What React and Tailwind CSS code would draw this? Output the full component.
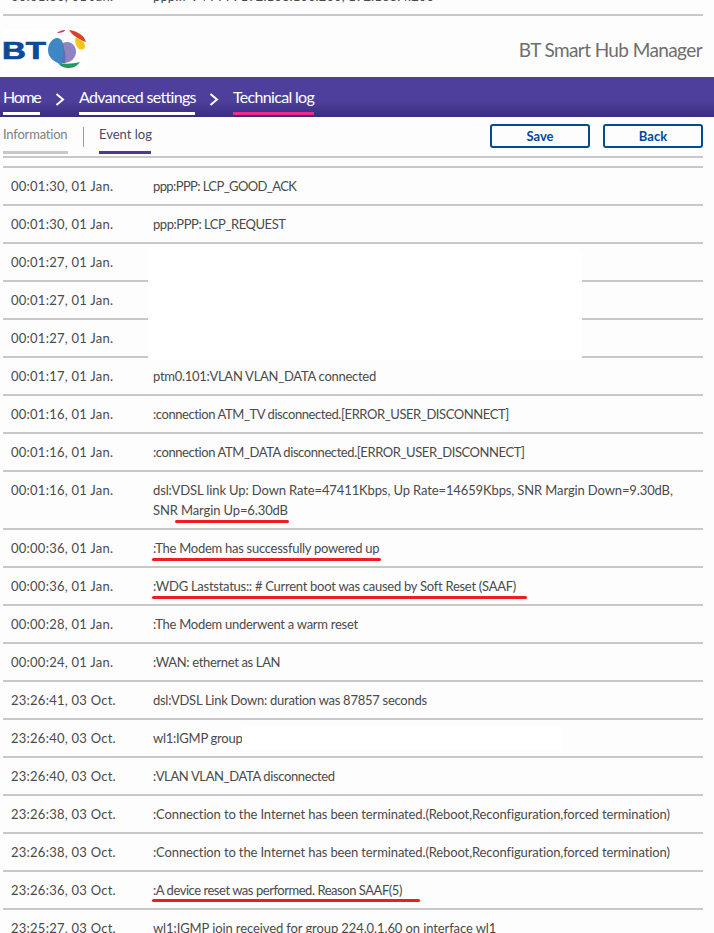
const F = "font-['Lato','Noto_Sans',sans-serif]";

const rows = [
  ["00:01:30, 01 Jan.", "ppp:PPP: LCP_GOOD_ACK", "", "", "tracking-[-0.6px]"],
  ["00:01:30, 01 Jan.", "ppp:PPP: LCP_REQUEST", "", "", "tracking-[-0.45px]"],
  ["00:01:27, 01 Jan.", ""],
  ["00:01:27, 01 Jan.", ""],
  ["00:01:27, 01 Jan.", ""],
  ["00:01:17, 01 Jan.", "ptm0.101:VLAN VLAN_DATA connected"],
  ["00:01:16, 01 Jan.", ":connection ATM_TV disconnected.[ERROR_USER_DISCONNECT]", "", "", "tracking-[-0.42px]"],
  ["00:01:16, 01 Jan.", ":connection ATM_DATA disconnected.[ERROR_USER_DISCONNECT]", "", "", "tracking-[-0.42px]"],
  ["00:01:16, 01 Jan.", "dsl:VDSL link Up: Down Rate=47411Kbps, Up Rate=14659Kbps, SNR Margin Down=9.30dB, SNR Margin Up=6.30dB", "tall", "left-[175px] w-[114px] top-[48px]", "tracking-[-0.12px]"],
  ["00:00:36, 01 Jan.", ":The Modem has successfully powered up", "", "left-[152px] w-[229px] top-[28px]"],
  ["00:00:36, 01 Jan.", ":WDG Laststatus:: # Current boot was caused by Soft Reset (SAAF)", "", "left-[152px] w-[375px] top-[28px]"],
  ["00:00:28, 01 Jan.", ":The Modem underwent a warm reset"],
  ["00:00:24, 01 Jan.", ":WAN: ethernet as LAN", "", "", "tracking-[-0.35px]"],
  ["23:26:41, 03 Oct.", "dsl:VDSL Link Down: duration was 87857 seconds"],
  ["23:26:40, 03 Oct.", "wl1:IGMP group"],
  ["23:26:40, 03 Oct.", ":VLAN VLAN_DATA disconnected", "", "", "tracking-[-0.37px]"],
  ["23:26:38, 03 Oct.", ":Connection to the Internet has been terminated.(Reboot,Reconfiguration,forced termination)", "", "", "tracking-[-0.13px]"],
  ["23:26:38, 03 Oct.", ":Connection to the Internet has been terminated.(Reboot,Reconfiguration,forced termination)", "", "", "tracking-[-0.13px]"],
  ["23:26:36, 03 Oct.", ":A device reset was performed. Reason SAAF(5)", "", "left-[152px] w-[268px] top-[27px]", "tracking-[-0.46px]"],
];

function Row({ time, msg, tall, line, track }) {
  return (
    <div className={`relative flex border-b-2 border-[#c8c8c8] ml-[3px] mr-[11px] ${tall ? "h-[58px]" : "h-[38px]"}`}>
      <div className="w-[145px] pl-[8px] pt-[8px] shrink-0 leading-[20px] tracking-[0.25px]">{time}</div>
      <div className={`w-[535px] pl-[5px] pt-[8px] leading-[20px] ${track || "tracking-[-0.27px]"}`}>{msg}</div>
      {line && <div className={`absolute h-[3px] -ml-[3px] rounded-full bg-[#ee1c25] ${line}`} />}
    </div>
  );
}

function Logo() {
  return (
    <svg width="84" height="40" viewBox="0 0 84 40" className="bg-white">
      <text x="-1" y="29" fontFamily="Liberation Sans" fontWeight="700" fontSize="23" textLength="44" lengthAdjust="spacingAndGlyphs" fill="#0b4a97" stroke="#0b4a97" strokeWidth="0.7">BT</text>
      <path d="M60 13c7-3 13 2 13 9 0 6-5 10-11 11-2 0-3 0-3-1z" fill="#8f84c0" />
      <path d="M45 20c0-7 5-12 9-12 5 0 7 6 7 12 0 5-1 10-2 14-6-1-14-5-14-14z" fill="#3f87c4" />
      <path d="M56 11c3 3 5 9 4 15-1 3-1 5-1 7 1 0 2 0 3 0 1-6 1-16-6-22z" fill="#5c6fb0" />
      <path d="M55 33c6 1 15 1 22-1-2 3-6 6-11 6-5 0-9-2-11-5z" fill="#1f9a5a" />
      <path d="M66 0c8 1 15 5 17 12-6-2-13-6-17-12z" fill="#d9412b" />
      <path d="M73 8c4 0 9 4 9 8 0 4-3 4-6 3-3-2-5-9-3-11z" fill="#f6c51e" />
      <path d="M54 3c2-2 5-3 8-3 0 2-4 3-8 3z" fill="#e8257f" />
    </svg>
  );
}

function Chevron() {
  return (
    <svg width="10" height="13" viewBox="0 0 10 13" fill="none" stroke="#fff" strokeWidth="2">
      <path d="M1.5 1 8 6.5 1.5 12" />
    </svg>
  );
}

export default function App() {
  return (
    <div className={`relative w-[714px] h-[933px] overflow-hidden bg-[#fdfdfd] text-[13px] text-[#4a4a4a] ${F}`}>
      <div className="h-[16px] overflow-hidden ml-[3px] mr-[11px] border-b-2 border-[#c8c8c8]">
        <div className="flex -mt-[14px] leading-[20px] h-[20px]">
          <div className="w-[145px] pl-[8px] tracking-[0.25px]">00:01:30, 01 Jan.</div>
          <div className="pl-[5px] tracking-[0.1px]">ppp:IPV4 PPP: 192.168.100.200, 192.168.4.200</div>
        </div>
      </div>

      <div className="h-[61px] flex items-start justify-between pl-[3px] pr-[12px] pt-[14px]">
        <Logo />
        <div className="text-[19px] tracking-[-0.6px] text-[#6e6e6e] leading-[26px] pt-[7px]">BT Smart Hub Manager</div>
      </div>

      <div className="h-[40px] flex items-start pl-[3px] text-white text-[16px] tracking-[-0.68px] bg-gradient-to-b from-[#4e3f9c] from-60% to-[#3a2c80]">
        <div className="w-[37px] h-[38px] pt-[8px] leading-[24px] tracking-[-1.3px] border-b-[3px] border-white whitespace-nowrap">Home</div>
        <div className="w-[39px] flex justify-center pt-[16px]"><Chevron /></div>
        <div className="w-[116px] h-[38px] pt-[8px] leading-[24px] border-b-[3px] border-white whitespace-nowrap">Advanced settings</div>
        <div className="w-[38px] flex justify-center pt-[16px]"><Chevron /></div>
        <div className="w-[81px] h-[38px] pt-[8px] leading-[24px] border-b-[3px] border-[#f0288c] whitespace-nowrap">Technical log</div>
      </div>

      <div className="h-[41px] flex items-start justify-between ml-[3px] mr-[11px] border-b-2 border-[#c8c8c8]">
        <div className="flex items-start h-[37px]">
          <div className="h-[37px] pt-[7px] leading-[20px] tracking-[-0.2px] text-[#808080] border-b-[3px] border-[#c8c8c8] w-[65px] whitespace-nowrap">Information</div>
          <div className="w-px h-[20px] bg-[#9a9a9a] mt-[10px] ml-[15px] mr-[15px]" />
          <div className="h-[37px] pt-[7px] leading-[20px] text-[#4a4a6a] border-b-[3px] border-[#4e3a96] w-[52px] whitespace-nowrap">Event log</div>
        </div>
        <div className="flex gap-[13px] mt-[7px]">
          <button className="w-[100px] h-[24px] rounded-[3px] border-2 border-[#004a98] text-[#004a98] font-bold text-[13px] leading-[18px]">Save</button>
          <button className="w-[100px] h-[24px] rounded-[3px] border-2 border-[#004a98] text-[#004a98] font-bold text-[13px] leading-[18px]">Back</button>
        </div>
      </div>

      <div className="h-[8px]" />
      <div className="border-t-2 border-[#c8c8c8] ml-[3px] mr-[11px]" />

      {rows.map((r, i) => (
        <Row key={i} time={r[0]} msg={r[1]} tall={r[2]} line={r[3]} track={r[4]} />
      ))}
      <div className="flex ml-[3px] leading-[20px] pt-[8px]">
        <div className="w-[145px] pl-[8px] tracking-[0.25px]">23:25:27, 03 Oct.</div>
        <div className="pl-[5px] tracking-[-0.1px]">wl1:IGMP join received for group 224.0.1.60 on interface wl1</div>
      </div>

      <div className="absolute left-[148px] top-[249px] w-[434px] h-[111px] bg-white" />
      <div className="absolute left-[242px] top-[727px] w-[320px] h-[23px] bg-white" />
    </div>
  );
}
